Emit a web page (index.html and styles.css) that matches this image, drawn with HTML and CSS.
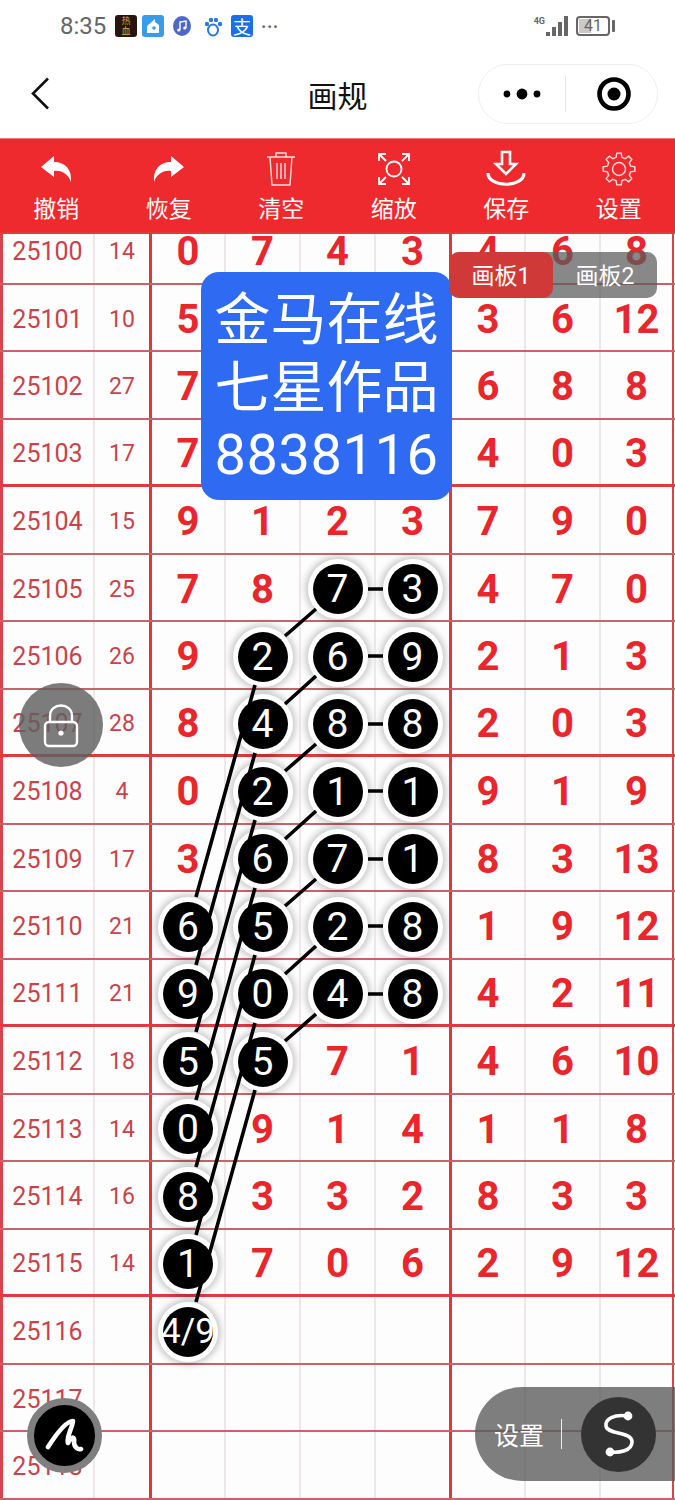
FILE: index.html
```html
<!DOCTYPE html>
<html lang="zh-CN">
<head>
  <meta charset="UTF-8" />
  <title>画规</title>
  <link rel="stylesheet" href="styles.css">
</head>
<body>
<div class="screen">

  <div class="status">
    <span class="time">8:35</span>
    <span class="app app-game">热血</span>
    <span class="app app-home"><svg width="16" height="16" viewBox="0 0 16 16"><path d="M2 8 L10 1 V4 L14 7 V15 H2 Z" fill="#fff"/><circle cx="9" cy="10" r="1.8" fill="#3a9be8"/></svg></span>
    <svg class="app-round" width="18" height="22" viewBox="0 0 18 22"><ellipse cx="9" cy="11" rx="9" ry="10" fill="#4d68c9"/><path d="M7 15 V7 L13 6 V13" fill="none" stroke="#fff" stroke-width="1.4"/><circle cx="5.8" cy="15" r="1.6" fill="#fff"/><circle cx="11.8" cy="13" r="1.6" fill="#fff"/></svg>
    <svg class="app-round" width="18" height="22" viewBox="0 0 18 22"><ellipse cx="9" cy="15" rx="5" ry="5.5" fill="none" stroke="#2f79d8" stroke-width="2"/><circle cx="3" cy="9" r="2.2" fill="#2f79d8"/><circle cx="7" cy="5" r="2.2" fill="#2f79d8"/><circle cx="12" cy="5" r="2.2" fill="#2f79d8"/><circle cx="16" cy="9" r="2.2" fill="#2f79d8"/></svg>
    <span class="app app-pay">支</span>
    <span class="more">···</span>
    <span class="status-right">
      <span class="net">4G</span>
      <span class="bars"><i class="b1"></i><i class="b2"></i><i class="b3"></i><i class="b4"></i></span>
      <span class="battery"><span class="battery-fill"></span><span class="battery-num">41</span></span>
      <span class="battery-nub"></span>
    </span>
  </div>

  <div class="nav">
    <svg class="back" width="20" height="33" viewBox="0 0 20 33"><path d="M18 1.5 L3 16.5 L18 31.5" fill="none" stroke="#111" stroke-width="2.6"/></svg>
    <span class="nav-title">画规</span>
    <div class="capsule">
      <svg width="38" height="14" viewBox="0 0 38 14"><circle cx="4" cy="7" r="3.4"/><circle cx="19" cy="7" r="5.4"/><circle cx="34" cy="7" r="3.4"/></svg>
      <span class="capsule-line"></span>
      <svg width="34" height="34" viewBox="0 0 34 34"><circle cx="17" cy="17" r="14.5" fill="none" stroke="#000" stroke-width="4.6"/><circle cx="17" cy="17" r="6.5"/></svg>
    </div>
  </div>

  <div class="toolbar">
    <div class="tool">
      <svg class="tool-icon" width="34" height="38" viewBox="0 0 34 38"><path d="M15 6 L2 17 L15 27 V21 C23 20 29 24 32 32 C33 20 27 12 15 12 Z" fill="#fff"/></svg>
      <span>撤销</span>
    </div>
    <div class="tool">
      <svg class="tool-icon" width="34" height="38" viewBox="0 0 34 38"><path d="M19 6 L32 17 L19 27 V21 C11 20 5 24 2 32 C1 20 7 12 19 12 Z" fill="#fff"/></svg>
      <span>恢复</span>
    </div>
    <div class="tool">
      <svg class="tool-icon thin" width="34" height="38" viewBox="0 0 34 38" fill="none" stroke="#fff" stroke-width="1.4"><path d="M3 7 H31 M12 7 V3 H22 V7 M6 7 L8 35 H26 L28 7 M13 13 V29 M17 13 V29 M21 13 V29"/></svg>
      <span>清空</span>
    </div>
    <div class="tool">
      <svg class="tool-icon" width="34" height="38" viewBox="0 0 34 38" fill="none" stroke="#fff" stroke-width="1.8"><circle cx="17" cy="19" r="7.5"/><path d="M2 11 V4 H9 M2 4 L9 11 M32 11 V4 H25 M32 4 L25 11 M2 27 V34 H9 M2 34 L9 27 M32 27 V34 H25 M32 34 L25 27"/></svg>
      <span>缩放</span>
    </div>
    <div class="tool">
      <svg class="tool-icon" width="40" height="38" viewBox="0 0 40 38" fill="none" stroke="#fff" stroke-width="2.6"><path d="M16 2 H24 V14 H30 L20 24 L10 14 H16 Z"/><path d="M2 23 C2 38 38 38 38 23" stroke-width="3.2"/></svg>
      <span>保存</span>
    </div>
    <div class="tool">
      <svg class="tool-icon thin" width="34" height="38" viewBox="-17 -19 34 38" fill="none" stroke="#fff" stroke-width="1.4"><polygon points="11.64,-2.9 15.84,-2.23 15.84,2.23 11.64,2.9 10.29,6.18 12.78,9.63 9.63,12.78 6.18,10.29 2.9,11.64 2.23,15.84 -2.23,15.84 -2.9,11.64 -6.18,10.29 -9.63,12.78 -12.78,9.63 -10.29,6.18 -11.64,2.9 -15.84,2.23 -15.84,-2.23 -11.64,-2.9 -10.29,-6.18 -12.78,-9.63 -9.63,-12.78 -6.18,-10.29 -2.9,-11.64 -2.23,-15.84 2.23,-15.84 2.9,-11.64 6.18,-10.29 9.63,-12.78 12.78,-9.63 10.29,-6.18"/><circle r="6.5"/></svg>
      <span>设置</span>
    </div>
  </div>

  <div class="board">
    <div class="rows">
      <div class="row"><div class="no">25100</div><div class="sum">14</div><div class="num">0</div><div class="num">7</div><div class="num">4</div><div class="num">3</div><div class="num">4</div><div class="num">6</div><div class="num">8</div></div>
      <div class="row"><div class="no">25101</div><div class="sum">10</div><div class="num">5</div><div class="num"></div><div class="num"></div><div class="num"></div><div class="num">3</div><div class="num">6</div><div class="num">12</div></div>
      <div class="row"><div class="no">25102</div><div class="sum">27</div><div class="num">7</div><div class="num"></div><div class="num"></div><div class="num"></div><div class="num">6</div><div class="num">8</div><div class="num">8</div></div>
      <div class="row"><div class="no">25103</div><div class="sum">17</div><div class="num">7</div><div class="num"></div><div class="num"></div><div class="num"></div><div class="num">4</div><div class="num">0</div><div class="num">3</div></div>
      <div class="row"><div class="no">25104</div><div class="sum">15</div><div class="num">9</div><div class="num">1</div><div class="num">2</div><div class="num">3</div><div class="num">7</div><div class="num">9</div><div class="num">0</div></div>
      <div class="row"><div class="no">25105</div><div class="sum">25</div><div class="num">7</div><div class="num">8</div><div class="num"><span class="ball">7</span></div><div class="num"><span class="ball">3</span></div><div class="num">4</div><div class="num">7</div><div class="num">0</div></div>
      <div class="row"><div class="no">25106</div><div class="sum">26</div><div class="num">9</div><div class="num"><span class="ball">2</span></div><div class="num"><span class="ball">6</span></div><div class="num"><span class="ball">9</span></div><div class="num">2</div><div class="num">1</div><div class="num">3</div></div>
      <div class="row"><div class="no">25107</div><div class="sum">28</div><div class="num">8</div><div class="num"><span class="ball">4</span></div><div class="num"><span class="ball">8</span></div><div class="num"><span class="ball">8</span></div><div class="num">2</div><div class="num">0</div><div class="num">3</div></div>
      <div class="row"><div class="no">25108</div><div class="sum">4</div><div class="num">0</div><div class="num"><span class="ball">2</span></div><div class="num"><span class="ball">1</span></div><div class="num"><span class="ball">1</span></div><div class="num">9</div><div class="num">1</div><div class="num">9</div></div>
      <div class="row"><div class="no">25109</div><div class="sum">17</div><div class="num">3</div><div class="num"><span class="ball">6</span></div><div class="num"><span class="ball">7</span></div><div class="num"><span class="ball">1</span></div><div class="num">8</div><div class="num">3</div><div class="num">13</div></div>
      <div class="row"><div class="no">25110</div><div class="sum">21</div><div class="num"><span class="ball">6</span></div><div class="num"><span class="ball">5</span></div><div class="num"><span class="ball">2</span></div><div class="num"><span class="ball">8</span></div><div class="num">1</div><div class="num">9</div><div class="num">12</div></div>
      <div class="row"><div class="no">25111</div><div class="sum">21</div><div class="num"><span class="ball">9</span></div><div class="num"><span class="ball">0</span></div><div class="num"><span class="ball">4</span></div><div class="num"><span class="ball">8</span></div><div class="num">4</div><div class="num">2</div><div class="num">11</div></div>
      <div class="row"><div class="no">25112</div><div class="sum">18</div><div class="num"><span class="ball">5</span></div><div class="num"><span class="ball">5</span></div><div class="num">7</div><div class="num">1</div><div class="num">4</div><div class="num">6</div><div class="num">10</div></div>
      <div class="row"><div class="no">25113</div><div class="sum">14</div><div class="num"><span class="ball">0</span></div><div class="num">9</div><div class="num">1</div><div class="num">4</div><div class="num">1</div><div class="num">1</div><div class="num">8</div></div>
      <div class="row"><div class="no">25114</div><div class="sum">16</div><div class="num"><span class="ball">8</span></div><div class="num">3</div><div class="num">3</div><div class="num">2</div><div class="num">8</div><div class="num">3</div><div class="num">3</div></div>
      <div class="row"><div class="no">25115</div><div class="sum">14</div><div class="num"><span class="ball">1</span></div><div class="num">7</div><div class="num">0</div><div class="num">6</div><div class="num">2</div><div class="num">9</div><div class="num">12</div></div>
      <div class="row"><div class="no">25116</div><div class="sum"></div><div class="num"><span class="ball ball-small">4/9</span></div><div class="num"></div><div class="num"></div><div class="num"></div><div class="num"></div><div class="num"></div><div class="num"></div></div>
      <div class="row"><div class="no">25117</div><div class="sum"></div><div class="num"></div><div class="num"></div><div class="num"></div><div class="num"></div><div class="num"></div><div class="num"></div><div class="num"></div></div>
      <div class="row"><div class="no">25118</div><div class="sum"></div><div class="num"></div><div class="num"></div><div class="num"></div><div class="num"></div><div class="num"></div><div class="num"></div><div class="num"></div></div>
    </div>
  </div>

  <!-- lines drawn by the user, page coordinates -->
  <svg class="links" width="675" height="1500" viewBox="0 0 675 1500">
    <path d="M368 589H383 M368 656H383 M368 724H383 M368 791H383 M368 859H383 M368 926H383 M368 994H383"/>
    <path d="M316 609L285 636 M316 676L285 704 M316 744L285 771 M316 811L285 839 M316 879L285 906 M316 946L285 974 M316 1014L285 1041"/>
    <path d="M255 685L196 897 M255 753L196 965 M255 820L196 1032 M255 888L196 1100 M255 955L196 1167 M255 1023L196 1235 M255 1090L196 1302"/>
  </svg>

  <div class="promo">
    <div>金马在线</div>
    <div>七星作品</div>
    <div class="promo-num">8838116</div>
  </div>

  <div class="tabs">
    <span class="tab tab-on">画板1</span>
    <span class="tab">画板2</span>
  </div>

  <div class="lock">
    <svg width="36" height="46" viewBox="0 0 36 46" fill="none" stroke="#fff" stroke-width="2.4"><path d="M7 20 V13 C7 -1 29 -1 29 13 V20"/><rect x="2" y="19" width="32" height="24" rx="4"/><circle cx="18" cy="30" r="2.6" fill="#fff" stroke="none"/></svg>
  </div>

  <div class="pen">
    <svg width="40" height="40" viewBox="0 0 40 40" fill="none" stroke="#fff" stroke-width="4.6" stroke-linecap="round" stroke-linejoin="round"><path d="M3 31 C12 17 21 5 28 5 C27 14 21 20 23 27 C27 19 30 21 29 26 C29 31 33 34 36 33"/></svg>
  </div>

  <div class="float-set">
    <span>设置</span>
    <i class="float-line"></i>
    <div class="float-circle">
      <svg width="40" height="50" viewBox="0 0 40 50" fill="none" stroke="#fff" stroke-width="3.6"><path d="M29 7 C15 5 6 10 7 17 C8 26 33 22 33 33 C33 42 20 44 11 43"/><circle cx="29" cy="7" r="4.4" fill="#fff" stroke="none"/><circle cx="11" cy="43" r="4.4" fill="#fff" stroke="none"/></svg>
    </div>
  </div>

</div>
</body>
</html>
```

FILE: styles.css
```css
* {
  box-sizing: border-box;
}
body {
  margin: 0;
  background-color: white;
  font-family: Roboto, "Noto Sans CJK SC", sans-serif;
}
.screen {
  position: relative;
  width: 675px;
  height: 1500px;
  overflow: hidden;
  display: flex;
  flex-direction: column;
}

/* status bar */
.status {
  height: 52px;
  flex: none;
  display: flex;
  align-items: center;
  padding: 0 60px;
  color: #666;
}
.time {
  font-size: 24px;
  width: 55px;
}
.app {
  width: 22px;
  height: 22px;
  display: flex;
  align-items: center;
  justify-content: center;
  border-radius: 3px;
  margin-right: 5px;
}
.app-game {
  background-color: #2a1410;
  color: #d9a74a;
  font-size: 9px;
  line-height: 10px;
  width: 22px;
  padding: 0 3px;
  text-align: center;
}
.app-home {
  background-color: #3a9be8;
}
.app-pay {
  background-color: #1c6fe8;
  color: white;
  font-size: 18px;
  margin-right: 8px;
}
.app-round {
  margin: 0 9px 0 4px;
}
.more {
  font-size: 18px;
  font-weight: bold;
  letter-spacing: 0.5px;
}
.status-right {
  margin-left: auto;
  display: flex;
  align-items: center;
}
.net {
  font-size: 9px;
  line-height: 10px;
  font-weight: bold;
  align-self: flex-start;
  margin-right: 1px;
}
.bars {
  display: flex;
  align-items: flex-end;
  gap: 2px;
  height: 20px;
  margin-right: 8px;
}
.bars i {
  display: block;
  width: 4px;
  background-color: #666;
}
.b1 { height: 4px; }
.b2 { height: 9px; }
.b3 { height: 14px; }
.b4 { height: 20px; }
.battery {
  position: relative;
  width: 34px;
  height: 20px;
  border: 2px solid #666;
  border-radius: 4px;
  display: flex;
  align-items: center;
  justify-content: center;
  font-size: 16px;
  line-height: 16px;
}
.battery-fill {
  position: absolute;
  left: 1px;
  top: 1px;
  bottom: 1px;
  width: 41%;
  background-color: #c9c9c9;
}
.battery-num {
  position: relative;
}
.battery-nub {
  width: 3px;
  height: 12px;
  background-color: #666;
  margin-left: 2px;
  border-radius: 1px;
}

/* title bar */
.nav {
  position: relative;
  height: 86px;
  flex: none;
  display: flex;
  align-items: center;
  justify-content: space-between;
  padding: 0 17px 3px 30px;
}
.nav-title {
  position: absolute;
  left: 0;
  right: 0;
  text-align: center;
  font-size: 30px;
  color: #111;
}
.capsule {
  width: 180px;
  height: 60px;
  border: 1px solid #eee;
  border-radius: 30px;
  display: flex;
  align-items: center;
  justify-content: space-between;
  padding: 0 26px 0 24px;
}
.capsule-line {
  width: 1px;
  height: 36px;
  background-color: #e6e6e6;
  margin-right: 8px;
}

/* tools */
.toolbar {
  height: 94px;
  flex: none;
  display: grid;
  grid-template-columns: repeat(6, 1fr);
  background-color: #ee2a2e;
  border-top: 1px solid #f47a7c;
  padding-top: 11px;
}
.tool {
  display: flex;
  flex-direction: column;
  align-items: center;
  color: #fff;
  font-size: 23px;
  line-height: 30px;
}
.tool-icon {
  margin-bottom: 7px;
}
.thin {
  opacity: 0.85;
}

/* table */
.board {
  flex: 1;
  overflow: hidden;
  background-color: #fdfdfd;
  border-top: 2px solid #e0393e;
}
.rows {
  margin-top: -17px;
}
.row {
  height: 67.5px;
  display: grid;
  grid-template-columns: 93px 56px repeat(7, 75px);
  padding-right: 1px;
  border-bottom: 2px solid #c9636b;
}
.row:nth-child(4n) {
  border-bottom: 3px solid #e0393e;
}
.row > div {
  display: flex;
  align-items: center;
  justify-content: center;
  border-left: 2px solid #ece8e8;
  padding-top: 4px;
}
.row > .no {
  border-left: 3px solid #d8444a;
  font-size: 25px;
  color: #c8434a;
  padding-right: 1px;
}
.row > .sum {
  font-size: 23px;
  color: #c8434a;
}
.row > .num {
  font-size: 40px;
  font-weight: 700;
  color: #e8262c;
}
.row > .num:nth-child(3),
.row > .num:nth-child(7) {
  border-left: 3px solid #d8383e;
}
.row > .num:nth-child(9) {
  border-right: 2px solid #d8444a;
}
.ball {
  flex: none;
  width: 50px;
  height: 50px;
  border-radius: 50%;
  background-color: black;
  color: white;
  font-size: 39px;
  font-weight: 400;
  display: flex;
  align-items: center;
  justify-content: center;
  box-shadow: 0 0 0 5px #fff, 0 0 6px 8px rgba(0, 0, 0, 0.2);
}
.ball-small {
  font-size: 35px;
  white-space: nowrap;
}
.links {
  position: absolute;
  left: 0;
  top: 0;
  fill: none;
  stroke: #000;
  stroke-width: 3.6;
}

/* floating things */
.promo {
  position: absolute;
  left: 201px;
  top: 272px;
  width: 251px;
  height: 228px;
  background-color: #2f6bf2;
  border-radius: 18px;
  color: white;
  font-size: 56px;
  line-height: 67.5px;
  text-align: center;
  padding-top: 15px;
}
.promo-num {
  letter-spacing: 0.5px;
}
.tabs {
  position: absolute;
  left: 449px;
  top: 252px;
  display: flex;
  border-radius: 10px;
  background-color: rgba(90, 90, 90, 0.72);
}
.tab {
  width: 104px;
  height: 46px;
  display: flex;
  align-items: center;
  justify-content: center;
  color: white;
  font-size: 23px;
  border-radius: 10px;
  padding-bottom: 3px;
}
.tab-on {
  background-color: #cf3a38;
}
.lock {
  position: absolute;
  left: 19px;
  top: 683px;
  width: 84px;
  height: 84px;
  border-radius: 50%;
  background-color: rgba(95, 95, 95, 0.82);
  display: flex;
  align-items: center;
  justify-content: center;
  padding-top: 2px;
}
.pen {
  position: absolute;
  left: 27px;
  top: 1398px;
  width: 75px;
  height: 75px;
  border-radius: 50%;
  background-color: black;
  border: 7px solid #7f7f7f;
  display: flex;
  align-items: center;
  justify-content: center;
}
.float-set {
  position: absolute;
  left: 475px;
  top: 1387px;
  width: 200px;
  height: 94px;
  border-radius: 47px 0 0 47px;
  background-color: rgba(90, 90, 90, 0.78);
  display: flex;
  align-items: center;
  padding-left: 19px;
  color: white;
  font-size: 25px;
}
.float-line {
  width: 1px;
  height: 30px;
  background-color: #eee;
  margin: 0 19px 0 17px;
}
.float-circle {
  width: 75px;
  height: 75px;
  border-radius: 50%;
  background-color: #333;
  display: flex;
  align-items: center;
  justify-content: center;
}
```
